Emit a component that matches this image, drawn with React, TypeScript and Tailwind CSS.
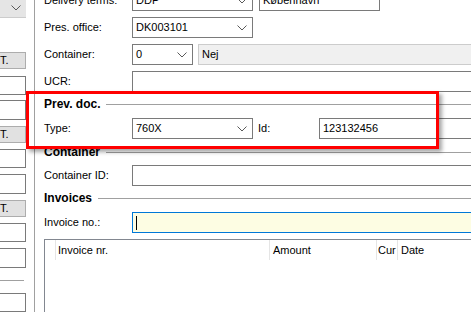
import type { ReactNode } from "react";

const FONT = { fontFamily: '"Liberation Sans", Arial, sans-serif' };

function Chevron() {
  return (
    <svg width="10" height="6" viewBox="0 0 10 6" className="shrink-0">
      <path d="M0.5 0.5 L5 5 L9.5 0.5" fill="none" stroke="#5a5a5a" strokeWidth="1" />
    </svg>
  );
}

function Combo({ value, w }: { value: string; w: string }) {
  return (
    <div className={`flex h-[21px] ${w} shrink-0 items-center justify-between border border-[#7a7a7a] bg-white pl-[3px] pr-[5px]`}>
      <span>{value}</span>
      <Chevron />
    </div>
  );
}

function Field({ value, className = "" }: { value?: string; className?: string }) {
  return (
    <div className={`flex h-[21px] items-center border border-[#7a7a7a] bg-white pl-[3px] ${className}`}>
      {value}
    </div>
  );
}

function Row({ label, children, className = "" }: { label: string; children: ReactNode; className?: string }) {
  return (
    <div className={`flex h-[21px] items-center ${className}`}>
      <span className="w-[88px] shrink-0">{label}</span>
      {children}
    </div>
  );
}

function Group({ title, className = "" }: { title: string; className?: string }) {
  return (
    <div className={`flex h-[14px] items-center gap-[6px] ${className}`}>
      <span className="text-[12px] font-bold">{title}</span>
      <div className="h-px flex-1 bg-[#a0a0a0]" />
    </div>
  );
}

function SideBtn({ className = "" }: { className?: string }) {
  return (
    <div className={`flex h-[17px] w-[28px] -ml-[2px] items-center border border-[#adadad] bg-[#e1e1e1] pl-[1px] ${className}`}>
      T.
    </div>
  );
}

function SideInput({ className = "" }: { className?: string }) {
  return <div className={`h-[21px] w-[28px] -ml-[2px] border border-[#7a7a7a] bg-white ${className}`} />;
}

export default function App() {
  return (
    <div className="relative flex h-[312px] w-[471px] overflow-hidden bg-white text-[11px] text-black" style={FONT}>
      {/* left strip */}
      <div className="flex w-[34px] shrink-0 flex-col">
        <div className="flex h-[19px] w-[26px] items-center justify-end border-b border-[#cccccc] bg-[#e5e5e5] pr-[5px]">
          <Chevron />
        </div>
        <SideBtn className="mt-[34px]" />
        <SideInput className="mt-[7px]" />
        <SideInput className="mt-[5px]" />
        <SideBtn className="mt-[6px]" />
        <SideInput className="mt-[6px]" />
        <SideInput className="mt-[6px]" />
        <SideBtn className="mt-[6px]" />
        <SideInput className="mt-[6px]" />
        <SideInput className="mt-[6px]" />
        <div className="mt-[12px] h-px w-[24px] bg-[#a0a0a0]" />
        <SideInput className="mt-[12px]" />
      </div>
      <div className="w-px shrink-0 bg-[#a0a0a0]" />

      {/* main form */}
      <div className="flex w-[520px] shrink-0 flex-col pl-[9px]">
        <Row label="Delivery terms:" className="-mt-[10px]">
          <Combo value="DDP" w="w-[121px]" />
          <Field value="København" className="ml-[6px] w-[121px]" />
        </Row>
        <Row label="Pres. office:" className="mt-[6px]">
          <Combo value="DK003101" w="w-[121px]" />
        </Row>
        <Row label="Container:" className="mt-[6px]">
          <Combo value="0" w="w-[61px]" />
          <div className="ml-[5px] flex h-[21px] flex-1 items-center border border-[#cccccc] bg-[#f0f0f0] pl-[3px]">Nej</div>
        </Row>
        <Row label="UCR:" className="mt-[6px]">
          <Field className="flex-1" />
        </Row>

        <Group title="Prev. doc." className="mt-[5px]" />
        <Row label="Type:" className="mt-[7px]">
          <Combo value="760X" w="w-[121px]" />
          <span className="ml-[5px] w-[61px] shrink-0">Id:</span>
          <Field value="123132456" className="flex-1" />
        </Row>

        <Group title="Container" className="mt-[6px]" />
        <Row label="Container ID:" className="mt-[6px]">
          <Field className="flex-1" />
        </Row>

        <Group title="Invoices" className="mt-[5px]" />
        <Row label="Invoice no.:" className="mt-[7px]">
          <div className="flex h-[21px] flex-1 items-center border border-[#0078d7] bg-[#fdfde3] pl-[3px]">
            <div className="h-[14px] w-px bg-black" />
          </div>
        </Row>

        <div className="mt-[6px] flex-1 border-l border-t border-[#828790] bg-white">
          <div className="flex h-[20px] items-center">
            <div className="h-full w-[11px] border-r border-[#e5e5e5]" />
            <div className="flex h-full w-[214px] items-center border-r border-[#e5e5e5] pl-[2px]">Invoice nr.</div>
            <div className="flex h-full w-[107px] items-center border-r border-[#e5e5e5] pl-[3px]">Amount</div>
            <div className="flex h-full w-[21px] items-center border-r border-[#e5e5e5] pl-[1px]">Cur</div>
            <div className="flex h-full items-center pl-[3px]">Date</div>
          </div>
        </div>
      </div>

      {/* highlight annotation */}
      <div className="pointer-events-none absolute left-[26px] top-[91px] h-[58px] w-[413px] border-[3px] border-[#ff0000] shadow-[3px_3px_4px_rgba(0,0,0,0.35)]" />
    </div>
  );
}
